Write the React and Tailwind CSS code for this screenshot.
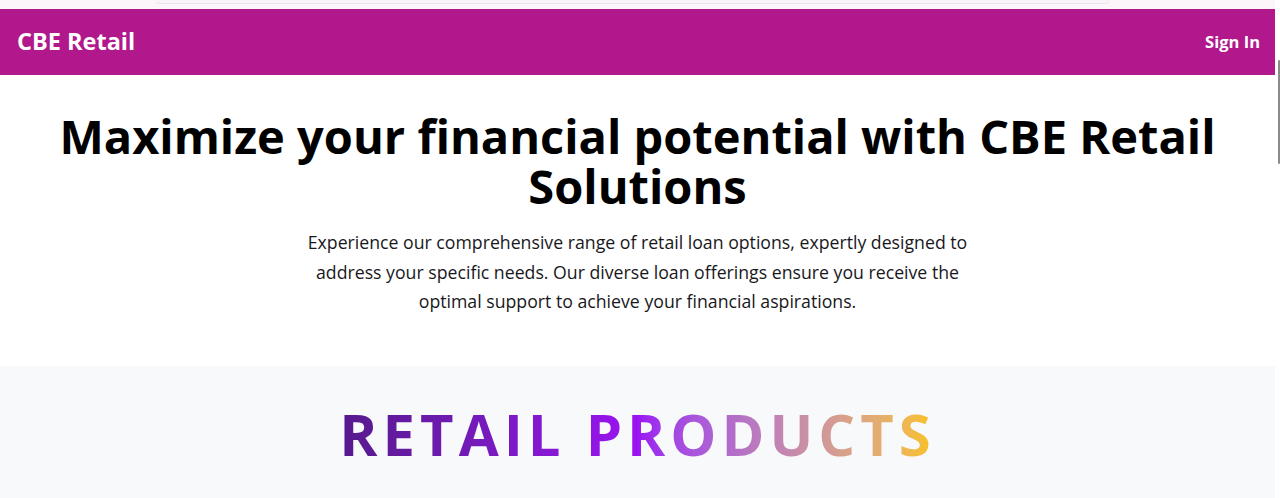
export default function App() {
  return (
    <div className="flex h-[498px] w-full overflow-hidden bg-white font-['Open_Sans',sans-serif]">
      <div className="flex flex-1 flex-col">
        <div className="h-[9px] bg-[#fcf6fa] px-[155px]">
          <div className="h-[4px] w-[955px] rounded-b-xl border-b border-[#ece4ee] bg-[#f8f4f9]" />
        </div>

        <header className="flex h-[66px] items-center justify-between bg-[#b1188b] pl-[17px] pr-[15px] text-white">
          <span className="text-[23.5px] font-bold">CBE Retail</span>
          <button className="text-[16.5px] font-bold">Sign In</button>
        </header>

        <section className="flex flex-col items-center px-12 pt-[36px] pb-[49px] text-center">
          <h1 className="max-w-[1180px] text-[47px] font-bold leading-[50px] text-black">
            Maximize your financial potential with CBE Retail Solutions
          </h1>
          <p className="mt-[17px] max-w-[700px] text-[17.7px] leading-[29.5px] text-zinc-900">
            Experience our comprehensive range of retail loan options, expertly designed to address your
            specific needs. Our diverse loan offerings ensure you receive the optimal support to achieve your
            financial aspirations.
          </p>
        </section>

        <section className="flex flex-1 justify-center bg-[#f8f9fb] pt-[24px]">
          <h2 className="inline-block h-fit bg-gradient-to-r from-[#561a8c] via-[#9b12f2] to-[#fac200] bg-clip-text text-[58px] font-bold tracking-[0.086em] text-transparent">
            RETAIL PRODUCTS
          </h2>
        </section>
      </div>
      <aside className="w-[5px] bg-white pt-[60px]">
        <div className="ml-[3px] h-[104px] w-[2px] rounded bg-[#8a8a8a]" />
      </aside>
    </div>
  );
}
